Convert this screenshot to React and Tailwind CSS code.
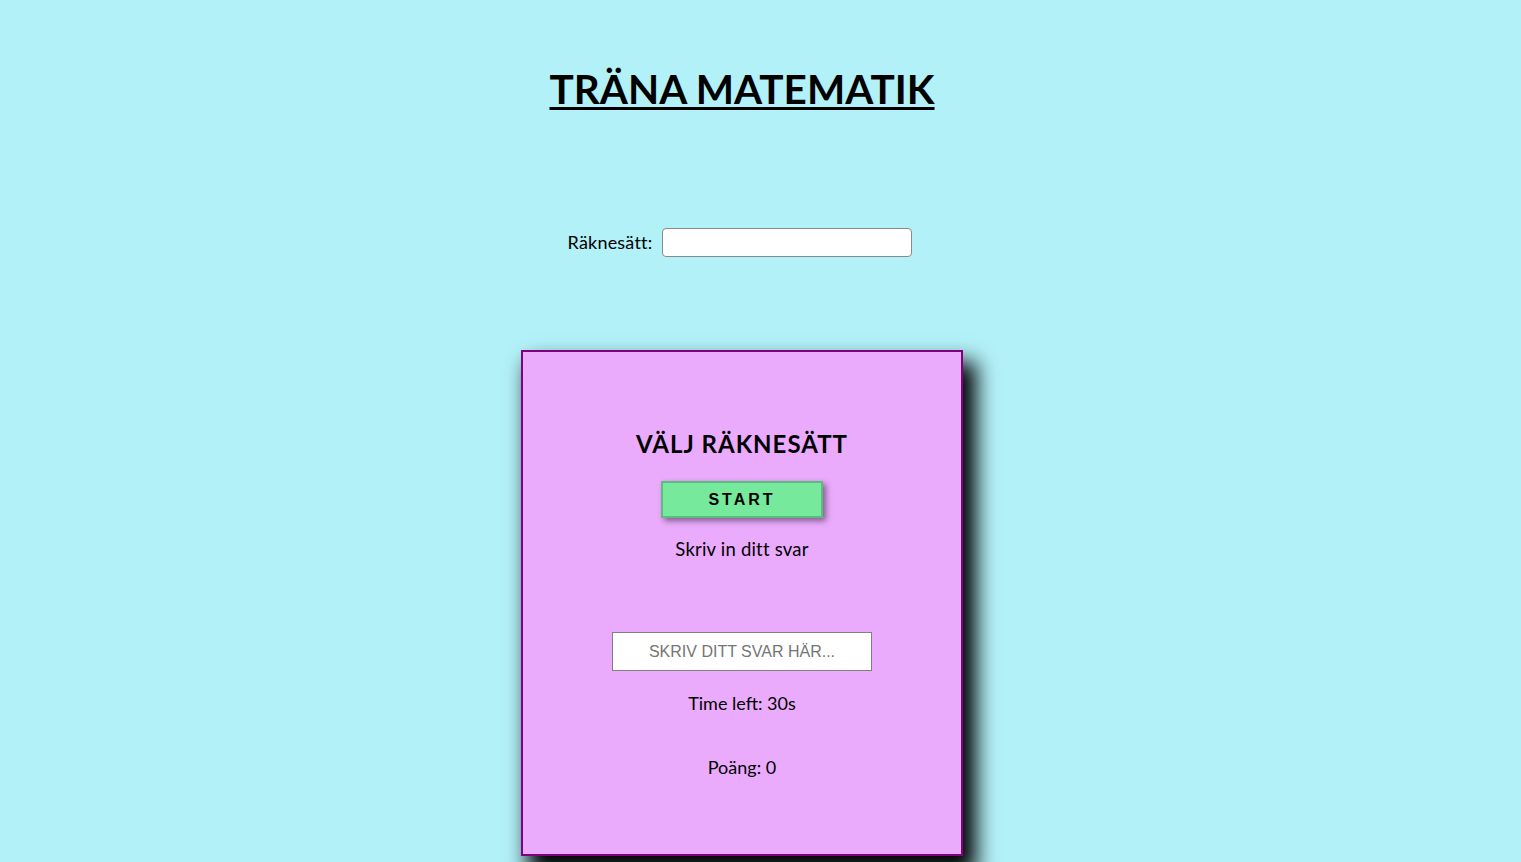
export default function App() {
  const font = { fontFamily: '"Lato", "Open Sans", sans-serif' };
  return (
    <div className="min-h-[862px] w-full bg-[#b3f1f8] overflow-hidden pr-[37px]" style={font}>
      <div className="flex flex-col items-center">
        <h1 className="mt-[65px] text-[40.5px] leading-[48px] font-bold text-black underline decoration-[3px] underline-offset-[3px]">
          TRÄNA MATEMATIK
        </h1>
        <div className="mt-[115px] flex items-center gap-[10px] pr-[4px]">
          <label className="text-[18px] text-black tracking-[0.2px]">Räknesätt:</label>
          <input
            type="text"
            className="w-[250px] h-[29px] rounded-[4px] border border-[#8a8a8a] bg-white"
          />
        </div>
        <div className="mt-[93px] w-[442px] h-[506px] border-2 border-[#800080] bg-[#ebabfd] shadow-[10px_15px_20px_3px_rgba(0,0,0,1)] flex flex-col items-center">
          <h2 className="mt-[77px] text-[24px] leading-[30px] font-bold text-black tracking-[1px]">
            VÄLJ RÄKNESÄTT
          </h2>
          <button
            className="mt-[22px] w-[162px] h-[37px] bg-[#76e99c] border-2 border-[#5dbb80] text-black font-bold text-[16px] tracking-[3px] shadow-[3px_3px_6px_rgba(0,0,0,0.45)]"
            style={{ fontFamily: '"Liberation Sans", Arial, sans-serif' }}
          >
            START
          </button>
          <p className="mt-[19px] text-[18.5px] leading-[24px] text-black tracking-[0.2px]">Skriv in ditt svar</p>
          <input
            type="text"
            placeholder="SKRIV DITT SVAR HÄR..."
            className="mt-[71px] w-[260px] h-[39px] border border-[#808080] bg-white text-center text-[16px] placeholder:text-[#757575]"
            style={{ fontFamily: '"Liberation Sans", Arial, sans-serif' }}
          />
          <p className="mt-[20px] text-[18px] leading-[24px] text-black">Time left: 30s</p>
          <p className="mt-[40px] text-[18px] leading-[24px] text-black">Poäng: 0</p>
        </div>
      </div>
    </div>
  );
}
